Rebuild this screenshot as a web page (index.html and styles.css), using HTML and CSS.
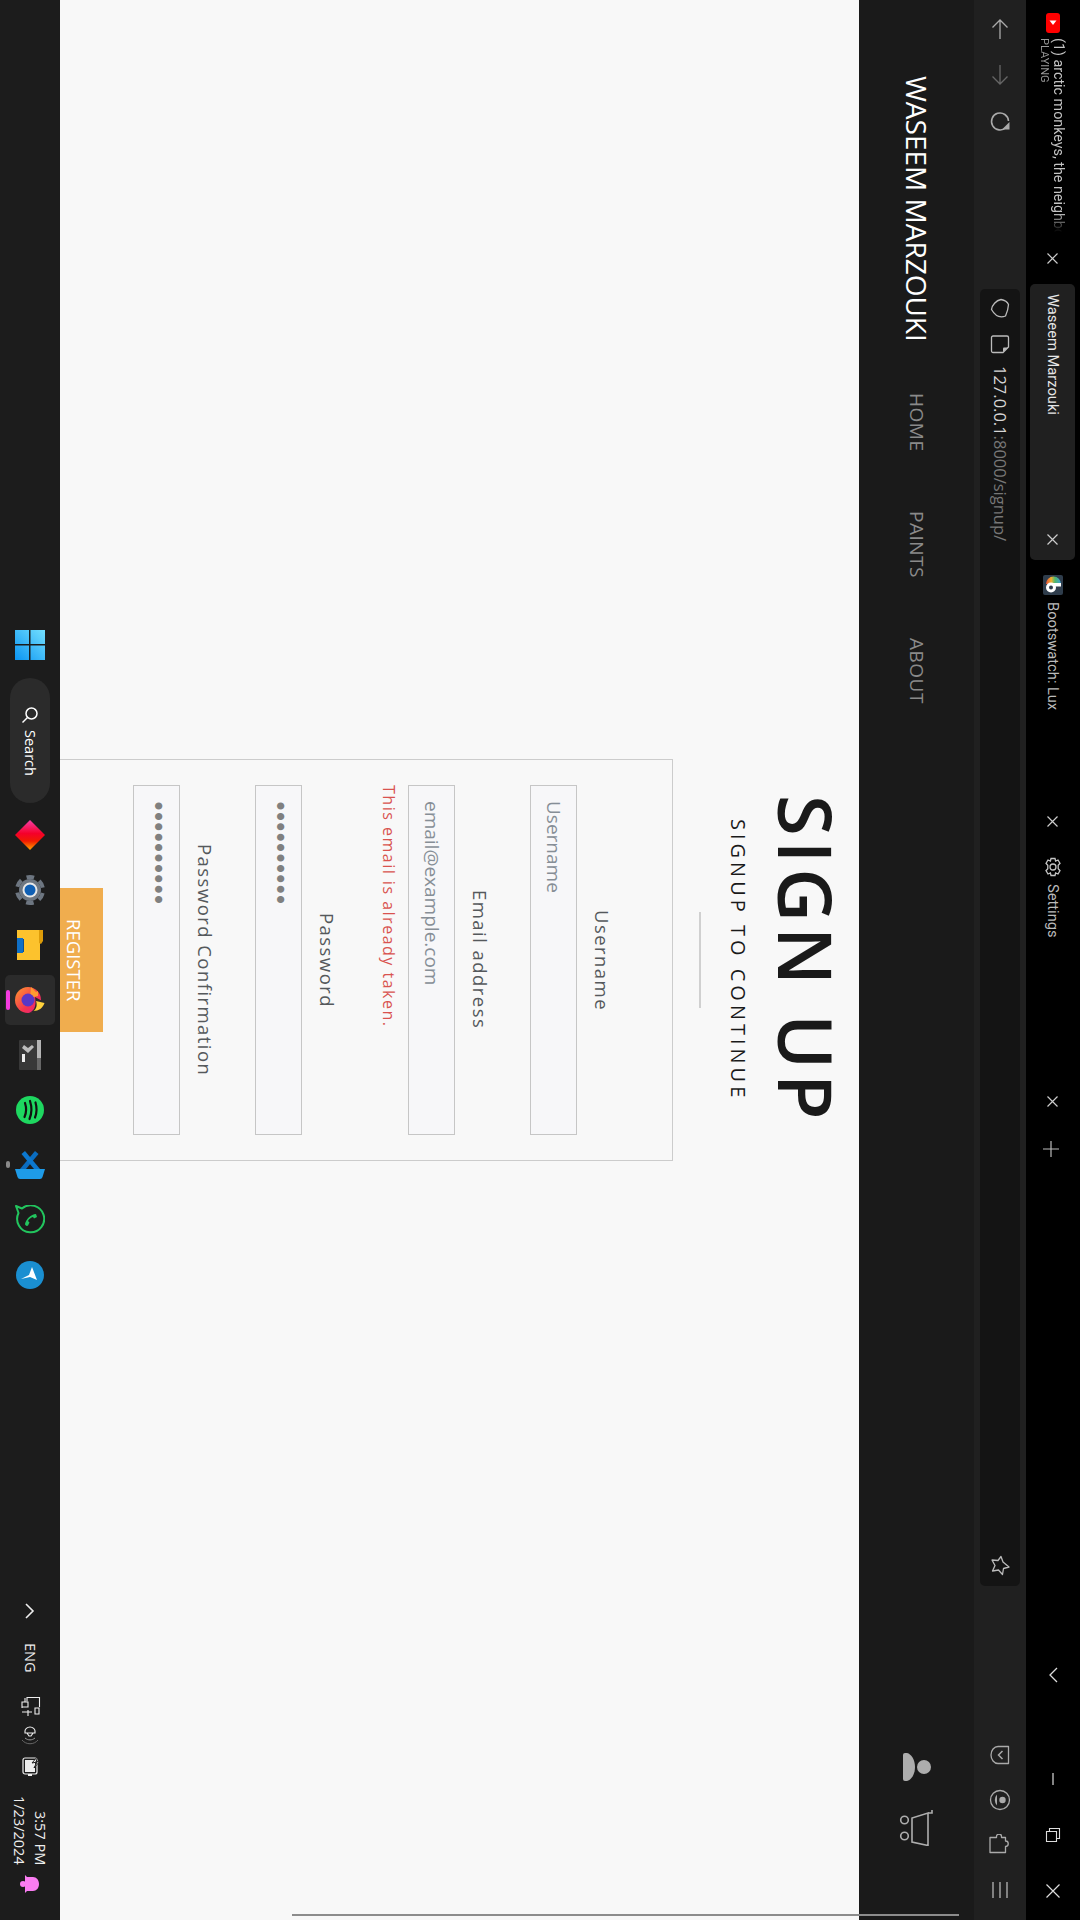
FILE: index.html
```html
<!DOCTYPE html>
<html lang="en">
  <head>
    <meta charset="utf-8">
    <title>Waseem Marzouki</title>
    <link rel="stylesheet" href="styles.css">
  </head>
  <body>
    <!-- the whole desktop is on its side, so everything runs in vertical-rl -->
    <div class="tabs">
      <div class="tab tab-media">
        <svg width="14" height="20" viewBox="0 0 14 20"><rect width="14" height="20" rx="3" fill="#f00"/><path d="M3.500 7.500h7L7 12z" fill="#fff"/></svg>
        <div class="media-text">
          <div class="media-title">(1) arctic monkeys, the neighbo</div>
          <div class="media-state">PLAYING</div>
        </div>
        <svg class="close" width="11" height="11" viewBox="0 0 11 11"><path d="M.5.5l10 10M10.5.5l-10 10"/></svg>
      </div>
      <div class="tab tab-active">
        <span class="tab-label">Waseem Marzouki</span>
        <svg class="close" width="11" height="11" viewBox="0 0 11 11"><path d="M.5.5l10 10M10.5.5l-10 10"/></svg>
      </div>
      <div class="tab tab-boot">
        <svg width="20" height="20" viewBox="0 0 20 20"><defs><linearGradient id="rainbow" x1="0" y1="0" x2="1" y2="0"><stop offset="0" stop-color="#e8503a"/><stop offset=".35" stop-color="#f0b030"/><stop offset=".6" stop-color="#4fb86a"/><stop offset="1" stop-color="#3a9fd8"/></linearGradient></defs><rect width="20" height="20" rx="2" fill="#2f3d4c"/><path d="M3 9a7.500 7.500 0 0 1 15 0z" fill="url(#rainbow)"/><circle cx="8" cy="12.500" r="5" fill="#fff"/><path d="M8 8h10v3.500H8z" fill="#fff"/><circle cx="8" cy="12.500" r="2" fill="#2f3d4c"/></svg>
        <span class="tab-label">Bootswatch: Lux</span>
        <svg class="close" width="11" height="11" viewBox="0 0 11 11"><path d="M.5.5l10 10M10.5.5l-10 10"/></svg>
      </div>
      <div class="tab tab-settings">
        <svg width="20" height="20" viewBox="0 0 20 20" fill="none" stroke="#c4c4c4" stroke-width="1.300"><path d="M8 1.500h4l.6 2.500 2.400-1 2 3.300-1.800 1.900v3.600l1.800 1.900-2 3.300-2.400-1-.6 2.500H8l-.6-2.500-2.400 1-2-3.300 1.800-1.900V8.200L3 6.300 5 3l2.400 1z"/><circle cx="10" cy="10" r="3"/></svg>
        <span class="tab-label">Settings</span>
        <svg class="close" width="11" height="11" viewBox="0 0 11 11"><path d="M.5.5l10 10M10.5.5l-10 10"/></svg>
      </div>
      <svg class="new-tab" width="16" height="16" viewBox="0 0 16 16"><path d="M8 0v16M0 8h16" stroke="#bbb" stroke-width="1.200"/></svg>
      <div class="window-btns">
        <svg class="win-back" width="16" height="16" viewBox="0 0 16 16" fill="none" stroke="#ddd" stroke-width="1.300"><path d="M12 1L5 8l7 7"/></svg>
        <svg width="16" height="16" viewBox="0 0 16 16"><path d="M8 2v12" stroke="#ddd" stroke-width="1.200"/></svg>
        <svg width="16" height="16" viewBox="0 0 16 16" fill="none" stroke="#ddd" stroke-width="1.100"><path d="M1.500 4.500h10v10h-10z"/><path d="M4.500 4.500v-3h10v10h-3"/></svg>
        <svg width="16" height="16" viewBox="0 0 16 16"><path d="M1.500 1.500l13 13M14.500 1.500l-13 13" stroke="#ddd" stroke-width="1.200"/></svg>
      </div>
    </div>

    <div class="toolbar">
      <svg class="tool" fill="none" width="22" height="22" viewBox="0 0 22 22"><path d="M11 21V2M3.500 9.500L11 2l7.500 7.500" stroke="#aaa"/></svg>
      <svg class="tool" fill="none" width="22" height="22" viewBox="0 0 22 22"><path d="M11 1v19M3.500 12.500L11 20l7.500-7.500" stroke="#666"/></svg>
      <svg class="tool" fill="none" width="22" height="22" viewBox="0 0 22 22"><path d="M17 17.500A8.500 8.500 0 1 1 19.500 11" stroke="#aaa" stroke-width="1.600"/><path d="M13 19.500h7.500V12z" fill="#aaa"/></svg>
      <div class="urlbar">
        <svg class="tool" fill="none" width="22" height="22" viewBox="0 0 22 22"><path d="M12 1.500c3.500.6 6.500 2.500 7.500 5-.2 4-1 7-3 11.500-5 2-10 .5-14-6.500C3 7 7 2.500 12 1.500z" stroke="#bbb" stroke-width="1.300"/></svg>
        <svg class="tool note" fill="none" width="22" height="22" viewBox="0 0 22 22"><path d="M4 3h14a1.500 1.500 0 0 1 1.500 1.500V14L14 19.500H4A1.500 1.500 0 0 1 2.500 18V4.500A1.500 1.500 0 0 1 4 3z" stroke="#bbb" stroke-width="1.300"/><path d="M19 14.500h-4a1 1 0 0 0-1 1V19z" fill="#bbb"/></svg>
        <span class="url"><b>127.0.0.1</b>:8000/signup/</span>
        <svg class="tool star" fill="none" width="22" height="22" viewBox="0 0 22 22"><path d="M20 12l-5.500 1.500-1 6-4-4.500-6 1 2.500-5.500L3 5l6 .5L12 1.500l2 5.500z" stroke="#bbb" stroke-width="1.300" stroke-linejoin="round"/></svg>
      </div>
      <div class="tool-end">
        <svg class="tool" fill="none" width="22" height="22" viewBox="0 0 22 22"><path d="M9 2.500h10.500v17H9a7 8.500 0 0 1 0-17z" stroke="#aaa" stroke-width="1.300" stroke-linejoin="round"/><path d="M13.500 7l-4 4 4 4" stroke="#aaa" stroke-width="1.500"/></svg>
        <svg class="tool" fill="none" width="22" height="22" viewBox="0 0 22 22"><circle cx="11" cy="11" r="9.500" stroke="#aaa" stroke-width="1.300"/><circle cx="13.500" cy="11" r="3.200" fill="#aaa"/><path d="M8 5.500a8 8 0 0 0 0 11z" fill="#aaa"/></svg>
        <svg class="tool" fill="none" width="22" height="22" viewBox="0 0 22 22"><path d="M1 3.500h6.500v-1a2.500 2.500 0 0 1 5 0v1H16.500v3.500a2.700 2.700 0 0 1 0 5.500V18.500H1z" stroke="#aaa" stroke-width="1.300" stroke-linejoin="round"/></svg>
        <svg class="tool" fill="none" width="22" height="22" viewBox="0 0 22 22"><path d="M4 3v16M11 3v16M18 3v16" stroke="#aaa" stroke-width="1.400"/></svg>
      </div>
    </div>

    <nav class="navbar">
      <a class="brand">WASEEM MARZOUKI</a>
      <a class="nav-link nav-home">HOME</a>
      <a class="nav-link nav-paints">PAINTS</a>
      <a class="nav-link nav-about">ABOUT</a>
      <div class="nav-icons">
        <svg width="36" height="36" viewBox="0 0 36 36" fill="#adadad"><path d="M4 6a2 2 0 0 1 2-2h2c4.500 1 8 7 8 14s-3.500 13-8 14H6a2 2 0 0 1-2-2z"/><circle cx="25" cy="18" r="7"/></svg>
        <svg width="36" height="36" viewBox="0 0 36 36" fill="none" stroke="#adadad" stroke-width="1.600"><circle cx="5.500" cy="10" r="3.800"/><circle cx="5.500" cy="26" r="3.800"/><path d="M13 8v24l16 3.500V3z"/><path d="M29 3h4V0"/></svg>
      </div>
    </nav>

    <main class="page">
      <h1 class="title">SIGN UP</h1>
      <p class="subtitle">SIGNUP TO CONTINUE</p>
      <hr class="rule">
      <form class="card" action="">
        <div class="field">
          <label for="username">Username</label>
          <input type="text" id="username" placeholder="Username">
        </div>
        <div class="field">
          <label for="email">Email address</label>
          <input type="email" id="email" value="email@example.com">
          <p class="error">This email is already taken.</p>
        </div>
        <div class="field">
          <label for="pass1">Password</label>
          <input class="pass" type="password" id="pass1" value="password12">
        </div>
        <div class="field field-last">
          <label for="pass2">Password Confirmation</label>
          <input class="pass" type="password" id="pass2" value="password12">
        </div>
        <button type="submit" class="register">REGISTER</button>
      </form>
    </main>

    <div class="taskbar">
      <div class="task-apps">
        <div class="task-btn">
          <svg width="30" height="30" viewBox="0 0 30 30"><defs><linearGradient id="win" x1="0" y1="1" x2="1" y2="0"><stop offset="0" stop-color="#0a94f2"/><stop offset="1" stop-color="#74e0ff"/></linearGradient></defs><path d="M0 0h14v14H0zM15.500 0H30v14H15.500zM0 15.500h14V30H0zM15.500 15.500H30V30H15.500z" fill="url(#win)"/></svg>
        </div>
        <div class="search">
          <svg width="18" height="18" viewBox="0 0 18 18" fill="none" stroke="#fff" stroke-width="1.500"><circle cx="10.500" cy="7.500" r="5.500"/><path d="M6.500 11.500L1.500 16.500"/></svg>
          <span>Search</span>
        </div>
        <div class="task-btn">
          <svg width="30" height="30" viewBox="0 0 30 30"><defs><linearGradient id="dia" x1="0" y1="0" x2="0" y2="1"><stop offset="0" stop-color="#f73fa8"/><stop offset=".45" stop-color="#f5002a"/><stop offset=".7" stop-color="#f01a00"/><stop offset="1" stop-color="#ffa500"/></linearGradient></defs><path d="M15 0l15 15-15 15L0 15z" fill="url(#dia)"/></svg>
        </div>
        <div class="task-btn">
          <svg width="30" height="30" viewBox="0 0 30 30"><circle cx="15" cy="15" r="11" fill="#6d7681"/><circle cx="15" cy="15" r="13" fill="none" stroke="#6d7681" stroke-width="4" stroke-dasharray="7.600 6" stroke-dashoffset="-3"/><circle cx="15" cy="15" r="7.500" fill="#e8e8e8"/><circle cx="15" cy="15" r="5.500" fill="#0f5fb4"/></svg>
        </div>
        <div class="task-btn">
          <svg width="30" height="30" viewBox="0 0 30 30"><path d="M2 0h23v30H2z" fill="#fcc22d"/><path d="M24 0h4v11l-2 3-2-1z" fill="#dd9c09"/><path d="M2 8h6v15H2z" fill="#0f6fc6"/><path d="M8 9h1v13H8z" fill="#0a4f96"/></svg>
        </div>
        <div class="task-btn task-active">
          <span class="task-mark"></span>
          <svg width="30" height="30" viewBox="0 0 30 30"><defs><linearGradient id="fox" x1="0" y1="0" x2="1" y2="1"><stop offset="0" stop-color="#ff9a2e"/><stop offset=".6" stop-color="#f5344f"/><stop offset="1" stop-color="#e6188d"/></linearGradient></defs><circle cx="13" cy="15" r="13" fill="url(#fox)"/><path d="M16 2l5 5 2-1v5l-8 2z" fill="#ff9c2e"/><circle cx="13" cy="15" r="6.500" fill="#5a37c6"/><path d="M20 12l9 5c-2 7-8 11-15 11 4-2 8-5 6-16z" fill="#2b2b2b"/><path d="M21 16l8.500 2c-1.500 5-6 8-11 8 3-2 4-6 2.500-10z" fill="#ffd23c"/></svg>
        </div>
        <div class="task-btn">
          <svg width="30" height="30" viewBox="0 0 30 30"><rect x="4" width="22" height="30" rx="1" fill="#383838"/><path d="M22 0h4v18h-4z" fill="#b4b4b4"/><path d="M22 18h4v12h-4z" fill="#666"/><path d="M7 8l2-3 4 3 4-3 2 2-6 6z" fill="#bdbdbd"/><path d="M7 14h3v8H7z" fill="#eee"/></svg>
        </div>
        <div class="task-btn">
          <svg width="30" height="30" viewBox="0 0 30 30"><circle cx="15" cy="15" r="14" fill="#1ed760"/><path d="M10 8c1.500 4.500 1.500 9.500-.5 14M15 6c2 6 2 12-.5 18M20.500 7.500c1.500 5 1.500 10-.5 15" fill="none" stroke="#111" stroke-width="2.200" stroke-linecap="round"/></svg>
        </div>
        <div class="task-btn">
          <span class="task-dot"></span>
          <svg width="30" height="30" viewBox="0 0 30 30"><path d="M0 19h30l-2.500 8a3 3 0 0 1-2.500 2H5a3 3 0 0 1-2.500-2z" fill="#1e9be8"/><path d="M5 19L20 1l3.500 3L11 19z" fill="#0a6cc0"/><path d="M25 19L10 1 6.500 4 19 19z" fill="#0c78cf"/></svg>
        </div>
        <div class="task-btn">
          <svg width="30" height="30" viewBox="0 0 30 30" fill="none" stroke="#22c55e" stroke-width="2"><path d="M1 1l6 2.500A13.500 13.500 0 1 1 3.500 8z" stroke-linejoin="round"/><path d="M21 9c-5 .5-10 5-11 10 0 1.500 2 2.500 3 1.500l1.500-3-1.500-1.500c1-2 3-3.500 5-4l1 1.500 3-1.500z" fill="#22c55e" stroke="none"/></svg>
        </div>
        <div class="task-btn">
          <svg width="30" height="30" viewBox="0 0 30 30"><circle cx="15" cy="15" r="14" fill="#1a8fd1"/><path d="M6 19l9-2 7 3-5-13-3 8z" fill="#fff"/></svg>
        </div>
      </div>
      <div class="tray">
        <svg class="tray-chevron" width="16" height="16" viewBox="0 0 16 16" fill="none" stroke="#eee" stroke-width="1.600"><path d="M4 1l7 7-7 7"/></svg>
        <span class="lang">ENG</span>
        <svg class="tray-net" width="22" height="22" viewBox="0 0 22 22" fill="none" stroke="#eee" stroke-width="1.100"><path d="M20.500 12V2.500H8v4"/><path d="M3 7h6v5H3zM6 3v4M3 12v1M3 17h10M9 15v6M16 13h4v6h-4z"/></svg>
        <svg class="tray-sound" width="20" height="20" viewBox="0 0 20 20" fill="none"><path d="M10 1c3 0 5 2.500 5 4v2H5V5c0-1.500 2-4 5-4zM7 7h6l-2 3H9z" stroke="#eee" stroke-width="1.100"/><path d="M5 12c3 2.500 7 2.500 10 0" stroke="#999"/><path d="M2 14c4 5 12 5 16 0" stroke="#666"/></svg>
        <svg class="tray-battery" width="20" height="20" viewBox="0 0 20 20"><rect x="3" y="2" width="14" height="16" rx="2" fill="none" stroke="#eee" stroke-width="1.200"/><path d="M5 4h10v12H5z" fill="#eee"/><path d="M8 18h4v2H8z" fill="#eee"/><path d="M18 0l-6 7 5-1-3 6 6-7-4 1z" fill="#eee" stroke="#1c1c1c"/></svg>
        <div class="clock">
          <div>3:57 PM</div>
          <div>1/23/2024</div>
        </div>
        <svg class="tray-bell" width="20" height="20" viewBox="0 0 20 20" fill="#fb7df2"><path d="M5 1l2 2h6c3.500 0 6 3 6 7s-2.500 7-6 7H7l-2 2z"/><circle cx="3" cy="10" r="3"/></svg>
      </div>
    </div>

    <div class="page-scroll"></div>
  </body>
</html>
```

FILE: styles.css
```css
html {
  writing-mode: vertical-rl;
}
body {
  margin: 0;
  inline-size: 1920px;
  block-size: 1080px;
  position: relative;
  overflow: hidden;
  background-color: #1c1c1c;
  font-family: "Open Sans", "Liberation Sans", sans-serif;
}
svg {
  display: block;
  flex: none;
}

/* tab strip */
.tabs {
  display: flex;
  box-sizing: border-box;
  block-size: 54px;
  padding-block-start: 5px;
  background-color: #000;
  color: #e6e6e6;
  font-family: Roboto, sans-serif;
  font-size: 14.700px;
}
.tab {
  display: flex;
  align-items: center;
  box-sizing: border-box;
  block-size: 45px;
}
.tab-label {
  white-space: nowrap;
}
.close {
  margin-inline-start: auto;
  stroke: #ccc;
  stroke-width: 1.200;
}
.tab-media {
  inline-size: 284px;
  padding-inline: 13px 20px;
}
.media-text {
  inline-size: 194px;
  margin-inline-start: 5px;
  white-space: nowrap;
  -webkit-mask-image: linear-gradient(to bottom, #000 90%, transparent);
  mask-image: linear-gradient(to bottom, #000 90%, transparent);
}
.media-title {
  font-size: 14.300px;
  line-height: 17px;
  color: #c4c4c4;
}
.media-state {
  font-size: 11px;
  line-height: 12px;
  color: #999;
}
.tab-active {
  inline-size: 276px;
  padding-inline: 10px 15px;
  background-color: #202020;
  border-radius: 5px;
}
.tab-boot {
  inline-size: 280px;
  padding-inline: 15px 13px;
}
.tab-boot .tab-label,
.tab-settings .tab-label {
  margin-inline-start: 7px;
  color: #bbb;
}
.tab-settings {
  inline-size: 280px;
  padding-inline: 17px 13px;
}
.new-tab {
  margin-inline-start: 21px;
  align-self: center;
}
.window-btns {
  display: flex;
  align-items: center;
  gap: 40px;
  margin-inline-start: auto;
  block-size: 45px;
  padding-inline-end: 21px;
}
.win-back {
  margin-inline-end: 48px;
}

/* address bar */
.toolbar {
  display: flex;
  align-items: center;
  box-sizing: border-box;
  block-size: 52px;
  padding-inline: 18px 19px;
  gap: 24px;
  background-color: #202020;
}
.tool {
  stroke-width: 1.300;
}
.urlbar {
  display: flex;
  align-items: center;
  box-sizing: border-box;
  inline-size: 1297px;
  block-size: 40px;
  margin-inline-start: 133px;
  padding-inline: 9px 9px;
  background-color: #141414;
  border-radius: 5px;
}
.note {
  margin-inline-start: 13px;
}
.url {
  margin-inline-start: 11px;
  font-size: 16.500px;
  color: #777;
}
.url b {
  font-weight: 400;
  color: #d6d6d6;
}
.star {
  margin-inline-start: auto;
}
.tool-end {
  display: flex;
  gap: 23px;
  margin-inline-start: auto;
}

/* site navbar */
.navbar {
  display: flex;
  align-items: center;
  box-sizing: border-box;
  block-size: 115px;
  padding-inline: 76px 74px;
  background-color: #1a1a1a;
}
.brand {
  font-size: 28px;
  color: #fff;
}
.nav-link {
  font-size: 19px;
  letter-spacing: .5px;
  color: #8a8a8a;
}
.nav-home {
  margin-inline-start: 51px;
}
.nav-paints,
.nav-about {
  margin-inline-start: 60px;
}
.nav-icons {
  display: flex;
  gap: 25px;
  margin-inline-start: auto;
}

/* signup page */
.page {
  box-sizing: border-box;
  block-size: 799px;
  overflow: hidden;
  background-color: #f8f8f8;
  color: #55595c;
}
.title {
  margin-block: 16px 0;
  margin-inline: 0;
  font-size: 74px;
  line-height: 74px;
  font-weight: 600;
  letter-spacing: 5px;
  text-align: center;
  color: #1a1a1a;
}
.subtitle {
  margin-block: 16px 0;
  margin-inline: 0;
  font-size: 20px;
  line-height: 30px;
  letter-spacing: 4px;
  text-align: center;
  color: #1a1a1a;
}
.rule {
  inline-size: 96px;
  block-size: 2px;
  margin-block: 22px 0;
  margin-inline: auto;
  border: 0;
  background-color: #d0d0d0;
}
.card {
  box-sizing: border-box;
  inline-size: 402px;
  margin-block: 26px 0;
  margin-inline: auto;
  padding-block: 58px 0;
  padding-inline: 25px;
  border: 1px solid #ccc;
  text-align: center;
}
.field {
  margin-block-end: 38px;
}
.field-last {
  margin-block-end: 30px;
}
.field label {
  display: block;
  margin-block-end: 13px;
  font-size: 18.500px;
  line-height: 24px;
  letter-spacing: 1.450px;
}
.field input {
  display: block;
  box-sizing: border-box;
  inline-size: 350px;
  block-size: 47px;
  padding-block: 0;
  padding-inline: 15px;
  border: 1px solid #c6c6c6;
  border-radius: 0;
  background-color: #f7f7f9;
  font-family: inherit;
  font-size: 19px;
  color: #868e96;
  outline: none;
}
.field input::placeholder {
  color: #868e96;
  opacity: 1;
}
.field .pass {
  font-family: "DejaVu Sans", sans-serif;
  font-size: 24px;
  letter-spacing: -3.760px;
  padding-inline-start: 13px;
  color: #808080;
}
.error {
  margin-block: 7px 0;
  margin-inline: 0;
  font-size: 16px;
  line-height: 24px;
  letter-spacing: 1.500px;
  text-align: start;
  color: #d9534f;
}
.register {
  display: block;
  inline-size: 144px;
  block-size: 57px;
  margin-inline: auto;
  margin-block: 0;
  padding: 0;
  border: 0;
  background-color: #f0ad4e;
  font-family: inherit;
  font-size: 18.500px;
  color: #fff;
}

/* windows taskbar */
.taskbar {
  display: grid;
  grid-template-columns: 1fr auto 1fr;
  align-items: center;
  block-size: 60px;
  background-color: #1c1c1c;
}
.task-apps {
  grid-column: 2;
  display: flex;
  align-items: center;
  gap: 5px;
}
.task-btn {
  position: relative;
  display: flex;
  align-items: center;
  justify-content: center;
  inline-size: 50px;
  block-size: 50px;
  border-radius: 5px;
}
.task-active {
  background-color: #2b2b2b;
}
.task-mark {
  position: absolute;
  inset-block-end: 1px;
  inset-inline-start: 15px;
  inline-size: 20px;
  block-size: 4px;
  border-radius: 2px;
  background-color: #f53be0;
}
.task-dot {
  position: absolute;
  inset-block-end: 1px;
  inset-inline-start: 21px;
  inline-size: 7px;
  block-size: 4px;
  border-radius: 2px;
  background-color: #8a8a8a;
}
.search {
  display: flex;
  align-items: center;
  box-sizing: border-box;
  inline-size: 125px;
  block-size: 40px;
  margin-inline: 3px 2px;
  padding-inline-start: 28px;
  gap: 6px;
  border-radius: 20px;
  background-color: #2b2b2b;
  font-size: 14.500px;
  color: #fff;
}
.tray {
  grid-column: 3;
  justify-self: end;
  display: flex;
  align-items: center;
  padding-inline-end: 26px;
  color: #eee;
  font-size: 14.500px;
}
.lang {
  margin-inline-start: 24px;
}
.tray-net {
  margin-inline-start: 23px;
}
.tray-sound {
  margin-inline-start: 9px;
}
.tray-battery {
  margin-inline-start: 10px;
}
.clock {
  margin-inline-start: 20px;
  line-height: 21px;
  text-align: end;
  white-space: nowrap;
}
.tray-bell {
  margin-inline-start: 9px;
}

/* scrollbar sits over the page */
.page-scroll {
  position: absolute;
  left: 292px;
  top: 1914px;
  width: 667px;
  height: 2px;
  background-color: #8c8c8c;
}
```
